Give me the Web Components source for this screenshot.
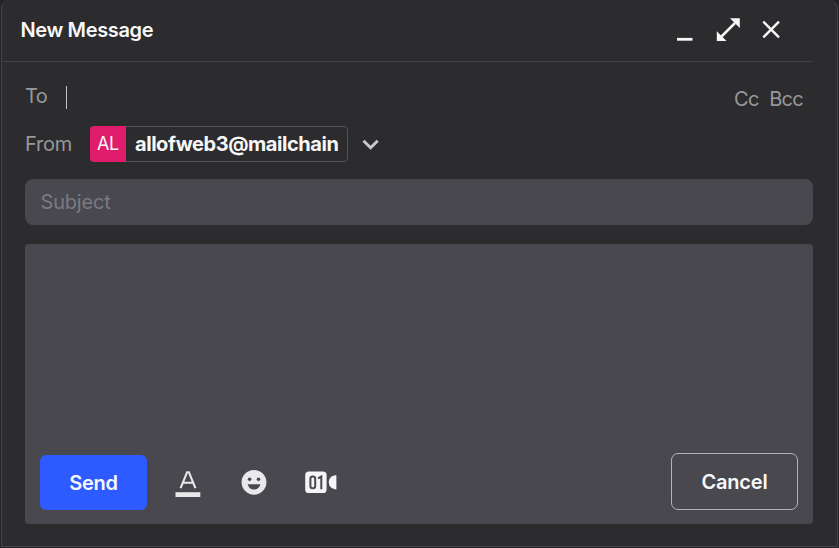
<!DOCTYPE html>
<html lang="en"><head><meta charset="utf-8"><title>New Message</title>
<style>
html,body{margin:0;height:100%;overflow:hidden;background:#242426}
body{font-family:Inter,"Liberation Sans",sans-serif;color:#f5f5f6}
</style></head><body>
<compose-window></compose-window>
<script>
const define=(name,html)=>{
  const t=document.createElement('template');t.innerHTML=html;
  customElements.define(name,class extends HTMLElement{
    constructor(){super();this.attachShadow({mode:'open'}).append(t.content.cloneNode(true));}
  });
};
define('title-bar',`<style>
:host{display:flex;box-sizing:border-box;height:62px;width:811px;padding:0 30px 1px 18.5px;align-items:center;border-bottom:1px solid #414143;color:#f7f7f8}
h1{margin:0;flex:1;font-size:20px;font-weight:600;line-height:24px;letter-spacing:-.36px;white-space:nowrap}
svg{display:block;flex:none}
</style><h1><slot></slot></h1>
<svg width="106" height="28" viewBox="0 0 106 28" fill="none" stroke="#f7f7f8">
<path d="M0 23.3H15.5" stroke-width="2.8"/>
<path d="M44 21L58 7" stroke-width="2.5"/>
<path d="M53 2.2H62.8V12ZM39.8 15.2V25H49.6Z" fill="#f7f7f8" stroke="none"/>
<path d="M86.3 5.6L102 21.3M102 5.6L86.3 21.3" stroke-width="2.4"/></svg>`);
define('recipient-row',`<style>
:host{display:flex;height:48px;padding:0 34px 0 23px;color:#98989b;font-size:20px;line-height:24px;letter-spacing:-.5px}
.to{padding-top:22px;width:41px}
i{width:1px;height:23px;margin-top:24px;background:#c4c4c6}
.copy{display:flex;gap:10.5px;margin-left:auto;padding-top:25px;letter-spacing:-.7px}
</style><span class="to">To</span><i></i><div class="copy"><span>Cc</span><span>Bcc</span></div>`);
define('address-chip',`<style>
:host{display:flex;box-sizing:border-box;width:258px;height:36px;border:1px solid #555557;border-radius:4px;align-items:center;color:#f7f7f8;font-size:20px;line-height:24px}
.avatar{display:flex;width:36px;height:36px;margin:-1px 9px -1px -1px;border-radius:4px 0 0 4px;align-items:center;justify-content:center;background:#df1b6c;font-size:18px;letter-spacing:-.3px;flex:none}
b{font-weight:700;white-space:nowrap;letter-spacing:-.45px}
</style><span class="avatar"><slot name="initials"></slot></span><b><slot></slot></b>`);
define('sender-row',`<style>
:host{display:flex;height:36px;margin-top:16px;padding-left:23px;align-items:center;color:#98989b;font-size:20px;line-height:24px}
.label{width:65px;letter-spacing:-.25px}svg{margin-left:13px}
</style><span class="label">From</span><address-chip><span slot="initials">AL</span>allofweb3@mailchain</address-chip>
<svg width="20" height="14" viewBox="0 0 20 14" fill="none"><path d="M2.5 3.7L9.6 10.7L16.7 3.7" stroke="#c9c9cb" stroke-width="3"/></svg>`);
define('subject-field',`<style>
:host{display:flex;box-sizing:border-box;height:46px;margin:17px 24px 0 23px;padding-left:15.5px;border-radius:8px;align-items:center;background:#49484f;color:#797a83;font-size:20px;line-height:24px;letter-spacing:-.2px}
</style><span><slot></slot></span>`);
define('action-button',`<style>
:host{display:flex;box-sizing:border-box;width:107px;height:55px;border-radius:6px;align-items:center;justify-content:center;background:#2e5bff;color:#f7f7fa;font-size:20px;font-weight:600;line-height:24px;letter-spacing:-.3px}
:host([outline]){width:127px;height:57px;border:1.5px solid #b4b4b8;border-radius:7px;background:none;letter-spacing:-.2px}
</style><span><slot></slot></span>`);
define('format-tools',`<style>
:host{display:flex;align-items:center;gap:38px;color:#e9e9ec}
svg{display:block}
</style>
<svg width="30" height="32" viewBox="0 0 30 32"><path d="M2.5 26.2H27.3V31H2.5Z" fill="#e9e9ec"/><path d="M7.6 22.2L14.1 6.2H15.9L22.4 22.2M10.2 16.8H19.8" fill="none" stroke="#e9e9ec" stroke-width="2.1"/></svg>
<svg width="26" height="26" viewBox="0 0 26 26"><circle cx="13" cy="13.3" r="12.4" fill="#e9e9ec"/><g fill="#49484f"><circle cx="8.6" cy="10.3" r="1.8"/><circle cx="17.5" cy="10.3" r="1.8"/><path d="M6.7 15.3H19.4Q17.8 20.5 13 20.5T6.7 15.3Z"/></g></svg>
<svg width="34" height="26" viewBox="0 0 34 26"><rect x=".2" y="2.6" width="21.4" height="21.4" rx="3.6" fill="#f5f5f7"/><path d="M31.4 6.3V20.3H29.9Q23.8 18.8 23.8 13.3T29.9 6.3Z" fill="#f5f5f7"/><g fill="none" stroke="#49484f" stroke-width="2"><rect x="5.4" y="7.5" width="4.8" height="11.8" rx="2.2"/><path d="M13 9.3L16.3 7.5V20.3"/></g></svg>`);
define('message-editor',`<style>
:host{display:flex;box-sizing:border-box;height:280px;margin:19px 24px 0 23px;padding:0 15px 14px;border-radius:4px;align-items:flex-end;background:#49484f}
format-tools{margin:0 auto 12px 26px}
</style><action-button>Send</action-button><format-tools></format-tools><action-button outline>Cancel</action-button>`);
define('compose-window',`<style>
:host{display:block;box-sizing:border-box;width:837px;height:547px;margin-left:1px;border:solid #454547;border-width:0 1px 1px;border-radius:9px 9px 0 0;background:#2c2c2e}
</style><title-bar>New Message</title-bar><recipient-row></recipient-row><sender-row></sender-row><subject-field>Subject</subject-field><message-editor></message-editor>`);
</script></body></html>
